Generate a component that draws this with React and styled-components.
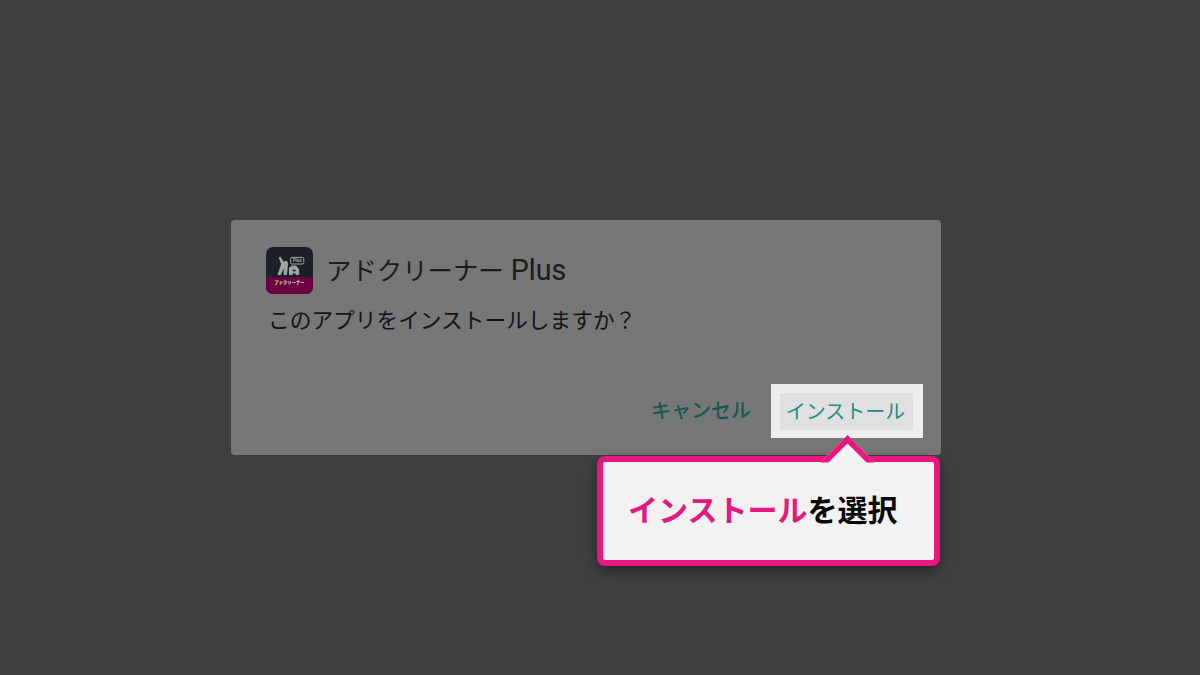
import React from "react";
import styled, { createGlobalStyle } from "styled-components";

const GlobalStyle = createGlobalStyle`
  html, body {
    margin: 0;
    padding: 0;
    height: 100%;
    background: #3f3f3f;
    font-family: Roboto, "Noto Sans CJK JP", sans-serif;
  }
`;

function AppIcon() {
    return (
        <IconSvg viewBox="0 0 47 47">
            <rect width="47" height="47" rx="7" fill="#1b2126" />
            <path d="M0 30H47V40a7 7 0 0 1-7 7H7a7 7 0 0 1-7-7Z" fill="#6a0040" />
            <path
                d="M11.5 28l3.6-11-2.4-6.6 1.6-.8 3.2 5 3.4-.8 1.2 2.6-1.2 11.6h-3.2l-.2-6.4-2.6 6.4Z"
                fill="#a3a3a3"
            />
            <path
                d="M23 28v-7.2l3-2.4h4l3.2 4.2V28h-3.4v-1.6h-3.2V28Zm3.6-5.2v1.4h3.4l-.4-1.4Z"
                fill="#a3a3a3"
            />
            <rect x="24.6" y="10.4" width="13.2" height="6.6" rx="1.4" fill="#1b2126" stroke="#a3a3a3" strokeWidth="1" />
            <PlusLabel x="31.2" y="15.3" textAnchor="middle">Plus</PlusLabel>
            <BandLabel x="23.5" y="37.4" textAnchor="middle">アドクリーナー</BandLabel>
        </IconSvg>
    );
}

export default function App() {
    return (
        <Page>
            <GlobalStyle />
            <Dialog>
                <Header>
                    <AppIcon />
                    <Title>
                        <Kana>アドクリーナー</Kana> Plus
                    </Title>
                </Header>
                <Message>このアプリをインストールしますか？</Message>
                <Footer>
                    <CancelButton>キャンセル</CancelButton>
                    <Highlight>
                        <InstallButton>インストール</InstallButton>
                    </Highlight>
                </Footer>
                <Callout>
                    <Arrow />
                    <CalloutText>
                        <Accent>インストール</Accent>を選択
                    </CalloutText>
                </Callout>
            </Dialog>
        </Page>
    );
}

const Page = styled.div`
  width: 1200px;
  height: 675px;
  box-sizing: border-box;
  padding: 220px 0 0 231px;
  background: #3f3f3f;
  overflow: hidden;
`;

const Dialog = styled.div`
  position: relative;
  width: 710px;
  height: 235px;
  box-sizing: border-box;
  padding: 27px 18px 0 35px;
  display: flex;
  flex-direction: column;
  background: #777777;
  border-radius: 4px;
`;

const Header = styled.div`
  display: flex;
  align-items: flex-start;
  height: 47px;
  gap: 13px;
`;

const IconSvg = styled.svg`
  width: 47px;
  height: 47px;
  flex: none;
`;

const PlusLabel = styled.text`
  font-family: Roboto, sans-serif;
  font-weight: 700;
  font-size: 4.6px;
  fill: #a3a3a3;
`;

const BandLabel = styled.text`
  font-family: "Noto Sans CJK JP", sans-serif;
  font-weight: 900;
  font-size: 4.3px;
  fill: #c8c8c8;
`;

const Title = styled.div`
  font-size: 28.6px;
  line-height: 47px;
  color: #1c1c1c;
`;

const Kana = styled.span`
  font-size: 25.4px;
`;

const Message = styled.div`
  margin: 11px 0 0 2px;
  font-size: 21.7px;
  line-height: 32px;
  color: #141414;
`;

const Footer = styled.div`
  margin-top: auto;
  margin-bottom: 17px;
  display: flex;
  align-items: center;
  justify-content: flex-end;
  gap: 20px;
`;

const CancelButton = styled.div`
  font-size: 20px;
  font-weight: 500;
  line-height: 32px;
  color: #155a50;
`;

const Highlight = styled.div`
  width: 152px;
  height: 54px;
  box-sizing: border-box;
  padding: 9px 10px 8px 9px;
  background: #eeeeee;
`;

const InstallButton = styled.div`
  height: 100%;
  padding: 0 2px 2px 0;
  box-sizing: border-box;
  display: flex;
  align-items: center;
  justify-content: center;
  background: #e0e0e0;
  border-radius: 2px;
  font-size: 20px;
  color: #1f8f7f;
`;

const Callout = styled.div`
  position: absolute;
  left: 366px;
  top: 236px;
  width: 343px;
  height: 110px;
  box-sizing: border-box;
  padding-left: 25px;
  display: flex;
  align-items: center;
  background: #f2f2f2;
  border: 6px solid #e6177f;
  border-radius: 8px;
  box-shadow: 0 5px 14px rgba(0, 0, 0, 0.4);
`;

const Arrow = styled.div`
  position: absolute;
  left: 224.5px;
  top: -19px;
  width: 39px;
  height: 39px;
  box-sizing: border-box;
  background: #f2f2f2;
  border-top: 6px solid #e6177f;
  border-left: 6px solid #e6177f;
  transform: rotate(45deg);
  clip-path: polygon(0 0, 100% 0, 0 100%);
`;

const CalloutText = styled.div`
  position: relative;
  font-size: 30px;
  font-weight: 700;
  line-height: 40px;
  margin-top: -6px;
  color: #0a0a0a;
  font-family: "Noto Sans CJK JP", sans-serif;
`;

const Accent = styled.span`
  color: #e6177f;
`;
